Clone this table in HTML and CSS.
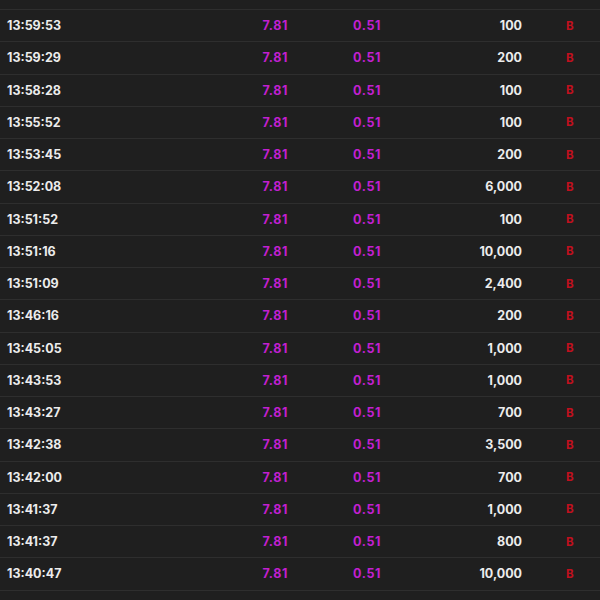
FILE: index.html
```html
<!DOCTYPE html>
<html>
<head>
<meta charset="utf-8">
<link rel="stylesheet" href="styles.css">
</head>
<body>
<div class="table">
  <div class="row"><span class="time">13:59:53</span><span class="price">7.81</span><span class="chg">0.51</span><span class="qty">100</span><span class="side">B</span></div>
  <div class="row"><span class="time">13:59:29</span><span class="price">7.81</span><span class="chg">0.51</span><span class="qty">200</span><span class="side">B</span></div>
  <div class="row"><span class="time">13:58:28</span><span class="price">7.81</span><span class="chg">0.51</span><span class="qty">100</span><span class="side">B</span></div>
  <div class="row"><span class="time">13:55:52</span><span class="price">7.81</span><span class="chg">0.51</span><span class="qty">100</span><span class="side">B</span></div>
  <div class="row"><span class="time">13:53:45</span><span class="price">7.81</span><span class="chg">0.51</span><span class="qty">200</span><span class="side">B</span></div>
  <div class="row"><span class="time">13:52:08</span><span class="price">7.81</span><span class="chg">0.51</span><span class="qty">6,000</span><span class="side">B</span></div>
  <div class="row"><span class="time">13:51:52</span><span class="price">7.81</span><span class="chg">0.51</span><span class="qty">100</span><span class="side">B</span></div>
  <div class="row"><span class="time">13:51:16</span><span class="price">7.81</span><span class="chg">0.51</span><span class="qty">10,000</span><span class="side">B</span></div>
  <div class="row"><span class="time">13:51:09</span><span class="price">7.81</span><span class="chg">0.51</span><span class="qty">2,400</span><span class="side">B</span></div>
  <div class="row"><span class="time">13:46:16</span><span class="price">7.81</span><span class="chg">0.51</span><span class="qty">200</span><span class="side">B</span></div>
  <div class="row"><span class="time">13:45:05</span><span class="price">7.81</span><span class="chg">0.51</span><span class="qty">1,000</span><span class="side">B</span></div>
  <div class="row"><span class="time">13:43:53</span><span class="price">7.81</span><span class="chg">0.51</span><span class="qty">1,000</span><span class="side">B</span></div>
  <div class="row"><span class="time">13:43:27</span><span class="price">7.81</span><span class="chg">0.51</span><span class="qty">700</span><span class="side">B</span></div>
  <div class="row"><span class="time">13:42:38</span><span class="price">7.81</span><span class="chg">0.51</span><span class="qty">3,500</span><span class="side">B</span></div>
  <div class="row"><span class="time">13:42:00</span><span class="price">7.81</span><span class="chg">0.51</span><span class="qty">700</span><span class="side">B</span></div>
  <div class="row"><span class="time">13:41:37</span><span class="price">7.81</span><span class="chg">0.51</span><span class="qty">1,000</span><span class="side">B</span></div>
  <div class="row"><span class="time">13:41:37</span><span class="price">7.81</span><span class="chg">0.51</span><span class="qty">800</span><span class="side">B</span></div>
  <div class="row"><span class="time">13:40:47</span><span class="price">7.81</span><span class="chg">0.51</span><span class="qty">10,000</span><span class="side">B</span></div>
  <div class="row"></div>
</div>
</body>
</html>
```
FILE: styles.css
```css
html, body {
  margin: 0;
  padding: 0;
  background: #1f1f1f;
  height: 100%;
  overflow: hidden;
}
.table {
  padding-top: 9px;
  font-family: "Inter", "Noto Sans", sans-serif;
  font-weight: 700;
  font-size: 12.5px;
}
.row {
  box-sizing: border-box;
  height: 32.25px;
  border-top: 1px solid #2e2e2e;
  display: grid;
  grid-template-columns: 200px 81px 93px 141px 1fr;
  align-items: center;
  padding-left: 7px;
}
.time { color: #ececec; }
.price, .chg { color: #c21fd0; text-align: right; letter-spacing: 0.6px; }
.qty { color: #ececec; text-align: right; }
.side {
  color: #c0101e;
  font-size: 11.5px;
  padding-left: 44px;
}
```
